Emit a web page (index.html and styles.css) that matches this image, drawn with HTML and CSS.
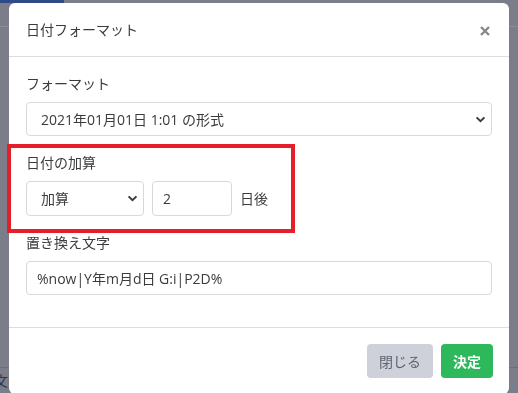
FILE: index.html
```html
<!DOCTYPE html>
<html lang="ja">
<head>
    <meta charset="UTF-8">
    <meta name="viewport" content="width=device-width, initial-scale=1.0">
    <title>日付フォーマット</title>
    <link rel="stylesheet" href="styles.css">
</head>

<body>

    <div class="page">
        <div class="page-nav">
            <div class="nav-tab"></div>
        </div>
        <div class="page-main"></div>
        <div class="page-row"><span class="page-text">文字</span></div>
    </div>

    <div class="backdrop">
        <div class="modal">
            <div class="modal-header">
                <div class="modal-title">日付フォーマット</div>
                <button type="button" class="close" aria-label="Close">
                    <svg width="10" height="10" viewBox="0 0 10 10">
                        <path d="M1 1L9 9M9 1L1 9" stroke="#888" stroke-width="2.4" stroke-linecap="butt"/>
                    </svg>
                </button>
            </div>

            <div class="modal-body">
                <div class="form-group">
                    <label for="format">フォーマット</label>
                    <select id="format" class="form-select">
                        <option>2021年01月01日 1:01 の形式</option>
                    </select>
                </div>

                <div class="form-group marked">
                    <div class="mark"></div>
                    <label for="calcType">日付の加算</label>
                    <div class="inline-row">
                        <select id="calcType" class="form-select select-small">
                            <option>加算</option>
                        </select>
                        <input type="text" id="calcDays" class="form-input input-small" value="2">
                        <span class="unit">日後</span>
                    </div>
                </div>

                <div class="form-group">
                    <label for="replaceText">置き換え文字</label>
                    <input type="text" id="replaceText" class="form-input" value="%now|Y年m月d日 G:i|P2D%">
                </div>
            </div>

            <div class="modal-footer">
                <button type="button" class="btn btn-gray">閉じる</button>
                <button type="button" class="btn btn-green">決定</button>
            </div>
        </div>
    </div>

</body>
</html>
```

FILE: styles.css
```css
html, body {
    margin: 0;
    height: 100%;
    overflow: hidden;
}
body {
    font-family: "Open Sans", "Noto Sans CJK JP", sans-serif;
    font-size: 14px;
    line-height: 1.5;
    color: #3b3b3b;
    background-color: #7b7d89;
}

/* page behind the backdrop */
.page {
    height: 100%;
    display: flex;
    flex-direction: column;
}
.page-nav {
    height: 26px;
    border-bottom: 1px solid #8b8d97;
}
.nav-tab {
    width: 64px;
    height: 3px;
    background-color: #2f4a86;
}
.page-main {
    height: 340px;
    border-bottom: 1px solid #6c6e7a;
}
.page-row {
    padding-top: 2px;
}
.page-text {
    display: inline-block;
    margin-left: -6px;
    font-size: 14px;
    color: #2e3553;
}

/* modal */
.backdrop {
    position: fixed;
    top: 0;
    left: 0;
    right: 0;
    bottom: 0;
    display: flex;
    justify-content: center;
    align-items: flex-start;
}
.modal {
    width: 500px;
    margin-top: 3px;
    background-color: #fff;
    border-radius: 6px;
}
.modal-header {
    display: flex;
    justify-content: space-between;
    align-items: center;
    padding: 16px 19px 16px 17px;
    border-bottom: 1px solid #dcdde1;
}
.modal-title {
    font-size: 14px;
    line-height: 21px;
    color: #3b3b3b;
}
.close {
    display: flex;
    padding: 0;
    margin-top: 2px;
    border: none;
    background: none;
    cursor: pointer;
}
.modal-body {
    padding: 16px 17px;
}
.form-group {
    margin-bottom: 16px;
}
label {
    display: block;
    margin-bottom: 8px;
    line-height: 21px;
}
.form-select, .form-input {
    display: block;
    width: 100%;
    height: 34px;
    box-sizing: border-box;
    border: 1px solid #d8d9de;
    border-radius: 4px;
    background-color: #fff;
    font-family: inherit;
    font-size: 14px;
    color: #3b3b3b;
}
.form-select {
    appearance: none;
    -webkit-appearance: none;
    padding: 0 32px 0 14px;
    background-image: url("data:image/svg+xml,%3csvg xmlns='http://www.w3.org/2000/svg' viewBox='0 0 12 8'%3e%3cpath fill='none' stroke='%23343a40' stroke-width='2.2' d='M1.5 1.5l4.5 4.5 4.5-4.5'/%3e%3c/svg%3e");
    background-repeat: no-repeat;
    background-position: right 5px center;
    background-size: 11px 7px;
}
.form-input {
    padding: 0 10px;
}

/* highlighted group */
.marked {
    position: relative;
}
.mark {
    position: absolute;
    top: -8px;
    left: -19px;
    width: 288px;
    height: 89px;
    box-sizing: border-box;
    border: 4px solid #e51f28;
    pointer-events: none;
}
.inline-row {
    display: flex;
    align-items: center;
}
.select-small {
    width: 118px;
    height: 35px;
    margin-right: 8px;
}
.input-small {
    width: 80px;
    height: 35px;
    margin-right: 8px;
}

.modal-footer {
    display: flex;
    justify-content: flex-end;
    gap: 8px;
    padding: 16px 16px;
    border-top: 1px solid #dcdde1;
}
.btn {
    height: 34px;
    padding: 0 12px;
    border: none;
    border-radius: 4px;
    font-family: inherit;
    font-size: 14px;
    cursor: pointer;
}
.btn-gray {
    background-color: #ced1d9;
    color: #5b6372;
}
.btn-green {
    background-color: #2db95b;
    color: #fff;
    font-weight: bold;
}
```
